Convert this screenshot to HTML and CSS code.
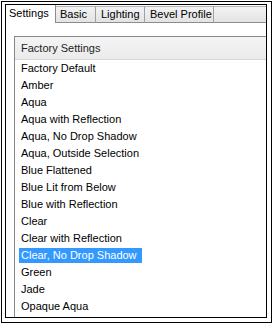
FILE: index.html
```html
<!DOCTYPE html>
<html lang="en">
<head>
  <meta charset="UTF-8">
  <title>Bevel Settings</title>
  <link rel="stylesheet" href="styles.css">
</head>
<body>
  <div class="frame">
    <div class="tabctl">
      <div class="tabstrip">
        <div class="tab tab-settings active">Settings</div>
        <div class="tab tab-basic">Basic</div>
        <div class="tab tab-lighting">Lighting</div>
        <div class="tab tab-bevel">Bevel Profile</div>
        <div class="tab-fill"></div>
      </div>
      <div class="panel">
        <div class="listbox">
          <div class="list-head">Factory Settings</div>
          <ul class="items">
            <li>Factory Default</li>
            <li>Amber</li>
            <li>Aqua</li>
            <li>Aqua with Reflection</li>
            <li>Aqua, No Drop Shadow</li>
            <li>Aqua, Outside Selection</li>
            <li>Blue Flattened</li>
            <li>Blue Lit from Below</li>
            <li>Blue with Reflection</li>
            <li>Clear</li>
            <li>Clear with Reflection</li>
            <li><span class="sel">Clear, No Drop Shadow</span></li>
            <li>Green</li>
            <li>Jade</li>
            <li>Opaque Aqua</li>
          </ul>
        </div>
      </div>
    </div>
  </div>
</body>
</html>
```
FILE: styles.css
```css
body {
  margin: 0;
  background: #fff;
  font-family: "Liberation Sans", Arial, sans-serif;
  font-size: 11px;
  color: #000;
}
.frame {
  width: 271px;
  height: 322px;
  box-sizing: border-box;
  margin: 1px 0 0 1px;
  border: 1px solid #000;
  padding: 2px 4px 4px 3px;
}
.tabctl {
  height: 100%;
  box-sizing: border-box;
  border: 1px solid #000;
  display: flex;
  flex-direction: column;
  overflow: hidden;
}
.tabstrip {
  display: flex;
  height: 18px;
  flex: none;
}
.tab {
  box-sizing: border-box;
  height: 17px;
  margin-top: 1px;
  padding-left: 4px;
  line-height: 15px;
  border-top: 1px solid #b4b4b4;
  border-right: 1px solid #a0a0a0;
  border-bottom: 1px solid #8c8c8c;
  background: linear-gradient(#f3f3f3, #e3e3e3);
  white-space: nowrap;
}
.tab.active {
  height: 18px;
  margin-top: 0;
  margin-left: 1px;
  padding-left: 2px;
  line-height: 16px;
  border-top: none;
  border-bottom: none;
  border-right-color: #8c8c8c;
  background: #fff;
}
.tab-settings { width: 49px; }
.tab-basic { width: 40px; }
.tab-lighting { width: 49px; padding-left: 5px; }
.tab-bevel { width: 69px; padding-left: 5px; }
.tab-fill {
  flex: 1;
  box-sizing: border-box;
  height: 17px;
  margin-top: 1px;
  border-top: 1px solid #b4b4b4;
  border-bottom: 1px solid #8c8c8c;
  background: linear-gradient(#f3f3f3, #e3e3e3);
}
.panel {
  flex: 1;
  background: #fff;
  padding: 13px 0 0 8px;
  min-height: 0;
}
.listbox {
  height: 100%;
  border-top: 1px solid #828790;
  border-left: 1px solid #828790;
}
.list-head {
  height: 22px;
  line-height: 22px;
  padding-left: 6px;
  color: #1e1e1e;
  background: linear-gradient(#f4f4f4, #ebebeb);
  border-bottom: 1px solid #d5d5d5;
}
.items {
  list-style: none;
  margin: 0;
  padding: 0;
}
.items li {
  height: 17px;
  line-height: 17px;
  padding-left: 6px;
  white-space: nowrap;
}
.sel {
  display: inline-block;
  vertical-align: top;
  margin: 1px 0 0 -2px;
  padding: 0 5px 0 2px;
  line-height: 15px;
  background: #3399ff;
  color: #fff;
}
```
